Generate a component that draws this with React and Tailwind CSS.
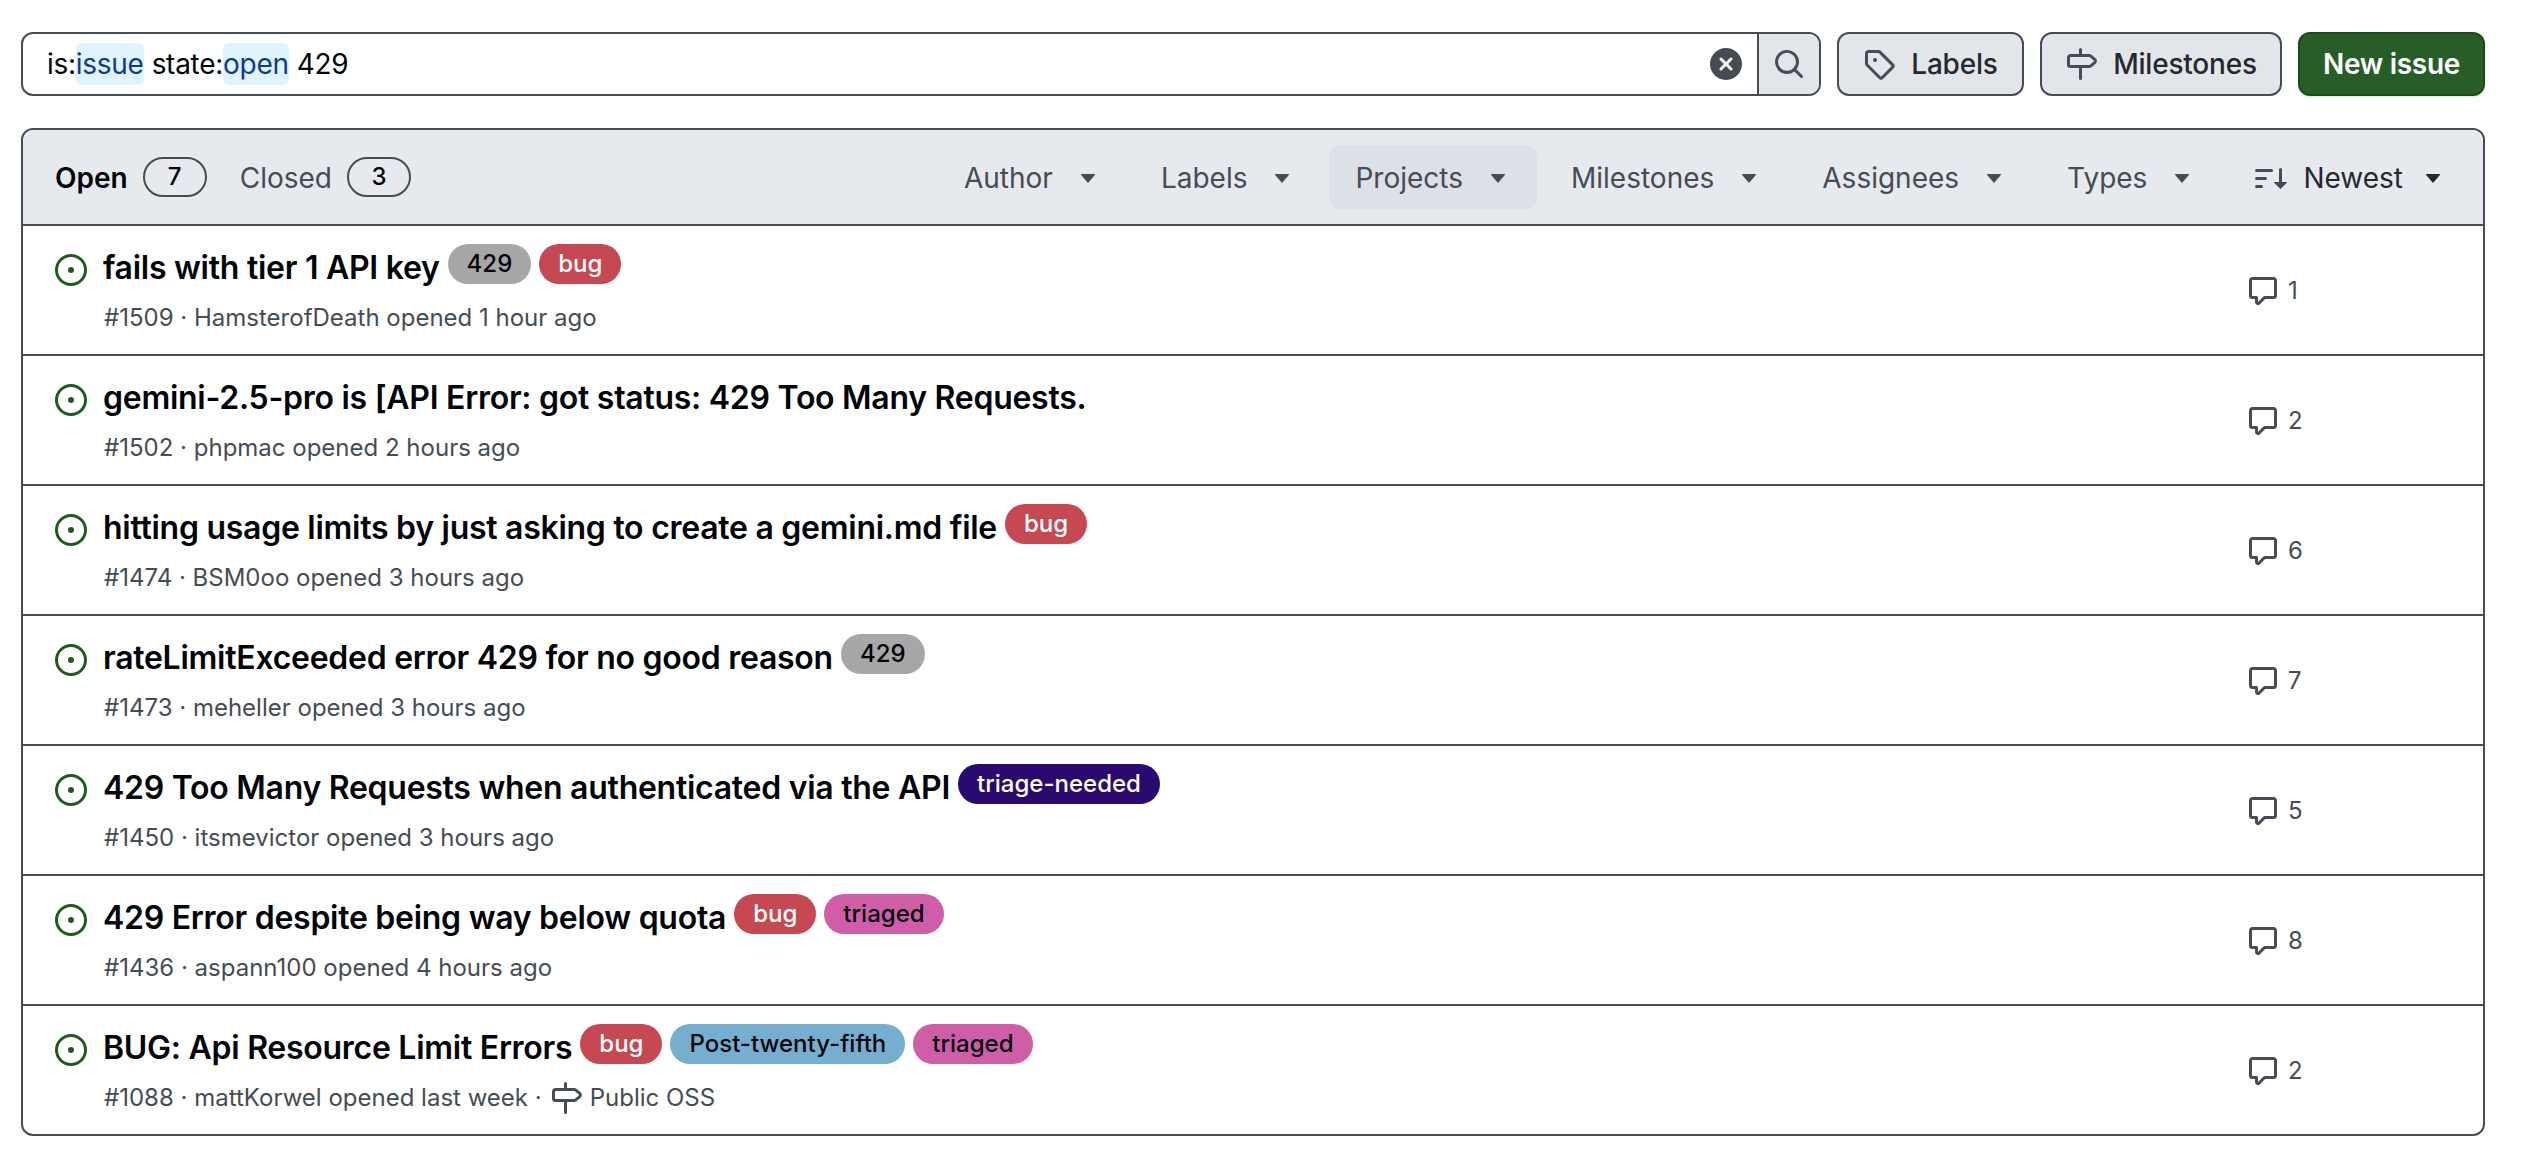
import React from "react";

const Icon = ({ d, size = 32, className = "" }) => (
  <svg viewBox="0 0 16 16" width={size} height={size} fill="currentColor" className={className}>
    <path d={d} />
  </svg>
);

const ICONS = {
  issue:
    "M8 9.5a1.5 1.5 0 1 0 0-3 1.5 1.5 0 0 0 0 3ZM8 0a8 8 0 1 1 0 16A8 8 0 0 1 8 0ZM1.5 8a6.5 6.5 0 1 0 13 0 6.5 6.5 0 0 0-13 0Z",
  tag: "M1 7.775V2.75C1 1.784 1.784 1 2.75 1h5.025c.464 0 .91.184 1.238.513l6.25 6.25a1.75 1.75 0 0 1 0 2.474l-5.026 5.026a1.75 1.75 0 0 1-2.474 0l-6.25-6.25A1.752 1.752 0 0 1 1 7.775Zm1.5 0c0 .066.026.13.073.177l6.25 6.25a.25.25 0 0 0 .354 0l5.025-5.025a.25.25 0 0 0 0-.354l-6.25-6.25a.25.25 0 0 0-.177-.073H2.75a.25.25 0 0 0-.25.25ZM6 5a1 1 0 1 1 0 2 1 1 0 0 1 0-2Z",
  milestone:
    "M7.75 0a.75.75 0 0 1 .75.75V3h3.634c.414 0 .814.147 1.13.414l2.07 1.75a1.75 1.75 0 0 1 0 2.672l-2.07 1.75a1.75 1.75 0 0 1-1.13.414H8.5v5.25a.75.75 0 0 1-1.5 0V10H2.75A1.75 1.75 0 0 1 1 8.25v-3.5C1 3.784 1.784 3 2.75 3H7V.75A.75.75 0 0 1 7.75 0Zm4.384 8.5a.25.25 0 0 0 .161-.059l2.07-1.75a.248.248 0 0 0 0-.382l-2.07-1.75a.25.25 0 0 0-.161-.059H2.75a.25.25 0 0 0-.25.25v3.5c0 .138.112.25.25.25h9.384Z",
  comment:
    "M1 2.75C1 1.784 1.784 1 2.75 1h10.5c.966 0 1.75.784 1.75 1.75v7.5A1.75 1.75 0 0 1 13.25 12H9.06l-2.573 2.573A1.458 1.458 0 0 1 4 13.543V12H2.75A1.75 1.75 0 0 1 1 10.25Zm1.75-.25a.25.25 0 0 0-.25.25v7.5c0 .138.112.25.25.25h2a.75.75 0 0 1 .75.75v2.19l2.72-2.72a.749.749 0 0 1 .53-.22h4.5a.25.25 0 0 0 .25-.25v-7.5a.25.25 0 0 0-.25-.25Z",
  search:
    "M10.68 11.74a6 6 0 0 1-7.922-8.982 6 6 0 0 1 8.982 7.922l3.04 3.04a.749.749 0 0 1-.326 1.275.749.749 0 0 1-.734-.215ZM11.5 7a4.499 4.499 0 1 0-8.997 0A4.499 4.499 0 0 0 11.5 7Z",
  clear:
    "M2.343 13.657A8 8 0 1 1 13.658 2.343 8 8 0 0 1 2.343 13.657ZM6.03 4.97a.751.751 0 0 0-1.042.018.751.751 0 0 0-.018 1.042L6.94 8 4.97 9.97a.749.749 0 0 0 .326 1.275.749.749 0 0 0 .734-.215L8 9.06l1.97 1.97a.749.749 0 0 0 1.275-.326.749.749 0 0 0-.215-.734L9.06 8l1.97-1.97a.749.749 0 0 0-.326-1.275.749.749 0 0 0-.734.215L8 6.94Z",
  sort: "M0 4.25a.75.75 0 0 1 .75-.75h7.5a.75.75 0 0 1 0 1.5H.75A.75.75 0 0 1 0 4.25Zm0 4a.75.75 0 0 1 .75-.75h4.5a.75.75 0 0 1 0 1.5H.75A.75.75 0 0 1 0 8.25Zm0 4a.75.75 0 0 1 .75-.75h2.5a.75.75 0 0 1 0 1.5H.75a.75.75 0 0 1-.75-.75ZM13.5 10h2.25a.25.25 0 0 1 .177.427l-3 3a.25.25 0 0 1-.354 0l-3-3A.25.25 0 0 1 9.75 10H12V3.75a.75.75 0 0 1 1.5 0V10Z",
};

const LABELS = {
  429: "bg-[#a7a7a7] text-[#010409]",
  bug: "bg-[#c64852] text-white",
  "triage-needed": "bg-[#2a0a6e] text-white",
  triaged: "bg-[#d05da8] text-[#010409]",
  "Post-twenty-fifth": "bg-[#76aecf] text-[#010409]",
};

const issues = [
  { title: "fails with tier 1 API key", labels: ["429", "bug"], meta: "#1509 · HamsterofDeath opened 1 hour ago", comments: 1 },
  { title: "gemini-2.5-pro is [API Error: got status: 429 Too Many Requests.", labels: [], meta: "#1502 · phpmac opened 2 hours ago", comments: 2 },
  { title: "hitting usage limits by just asking to create a gemini.md file", labels: ["bug"], meta: "#1474 · BSM0oo opened 3 hours ago", comments: 6 },
  { title: "rateLimitExceeded error 429 for no good reason", labels: ["429"], meta: "#1473 · meheller opened 3 hours ago", comments: 7 },
  { title: "429 Too Many Requests when authenticated via the API", labels: ["triage-needed"], meta: "#1450 · itsmevictor opened 3 hours ago", comments: 5 },
  { title: "429 Error despite being way below quota", labels: ["bug", "triaged"], meta: "#1436 · aspann100 opened 4 hours ago", comments: 8 },
  { title: "BUG: Api Resource Limit Errors", labels: ["bug", "Post-twenty-fifth", "triaged"], meta: "#1088 · mattKorwel opened last week ·", milestone: "Public OSS", comments: 2 },
];

const filters = ["Author", "Labels", "Projects", "Milestones", "Assignees", "Types"];

const Caret = ({ className = "ml-[28px]" }) => (
  <svg viewBox="0 0 14 9" width="14" height="9" fill="currentColor" className={`shrink-0 ${className}`}>
    <path d="M0.6 0h12.8a.6.6 0 0 1 .45 1L7.45 8.5a.6.6 0 0 1-.9 0L.15 1A.6.6 0 0 1 .6 0Z" />
  </svg>
);

const Counter = ({ children }) => (
  <span className="ml-[15px] flex h-[40px] w-[64px] items-center justify-center rounded-full border-2 border-[#454c54] text-[24px] font-medium text-[#010409]">
    {children}
  </span>
);

const FilterButton = ({ name }) => (
  <div
    className={`flex h-[64px] items-center rounded-[12px] pl-[26px] pr-[32px] pt-[2px] text-[28px] text-[#454c54] ${
      name === "Projects" ? "bg-[#dce0e7]" : ""
    }`}
  >
    {name}
    <Caret />
  </div>
);

const IssueRow = ({ issue }) => (
  <div className="flex h-[130px] items-start border-t-2 border-[#454c54]">
    <Icon d={ICONS.issue} className="ml-[32px] mt-[28px] shrink-0 text-[#1f5a1f]" />
    <div className="ml-[16px] flex-1 pt-[18px]">
      <div className="flex h-[40px] items-center">
        <span className="pt-[7px] text-[32px] font-semibold leading-[40px] tracking-[-0.27px] text-[#010409]">
          {issue.title}
        </span>
        {issue.labels.map((label) => (
          <span
            key={label}
            className={`ml-[8px] flex h-[40px] items-center rounded-full px-[19px] text-[24px] font-medium ${LABELS[label]}`}
          >
            {label}
          </span>
        ))}
      </div>
      <div className="mt-[16px] flex h-[36px] items-center pl-[1px] text-[24px] text-[#454c54]">
        {issue.meta}
        {issue.milestone && (
          <>
            <Icon d={ICONS.milestone} className="ml-[8px] mr-[8px]" />
            {issue.milestone}
          </>
        )}
      </div>
    </div>
    <div className="flex w-[236px] shrink-0 items-center gap-[9px] self-center pt-[2px] text-[24px] text-[#454c54]">
      <Icon d={ICONS.comment} />
      {issue.comments}
    </div>
  </div>
);

export default function App() {
  return (
    <div className="min-h-[1174px] bg-white pl-[21px] pt-[32px] text-[#010409] [font-family:Inter,'Noto_Sans',sans-serif]">
      <div className="w-[2464px]">
        <div className="flex h-[64px] gap-[16px]">
          <div className="flex flex-1 overflow-hidden rounded-[12px] border-2 border-[#454c54]">
            <div className="flex flex-1 items-center pl-[24px] pr-[15px] text-[28px] tracking-[-0.28px]">
              <span>is:</span>
              <span className="rounded-[6px] bg-[#e1f4fd] text-[#0f3a8f]">issue</span>
              <span className="ml-[8px]">state:</span>
              <span className="rounded-[6px] bg-[#e1f4fd] text-[#0f3a8f]">open</span>
              <span className="ml-[8px]">429</span>
              <Icon d={ICONS.clear} className="ml-auto text-[#454c54]" />
            </div>
            <div className="flex w-[62px] items-center justify-center border-l-2 border-[#454c54] bg-[#e2e6eb] text-[#454c54]">
              <Icon d={ICONS.search} />
            </div>
          </div>
          <div className="flex w-[187px] items-center justify-center gap-[16px] rounded-[12px] border-2 border-[#454c54] bg-[#e2e6eb] text-[28px] font-medium tracking-[-0.2px] text-[#25292e]">
            <Icon d={ICONS.tag} className="text-[#454c54]" />
            Labels
          </div>
          <div className="flex w-[242px] items-center justify-center gap-[16px] rounded-[12px] border-2 border-[#454c54] bg-[#e2e6eb] text-[28px] font-medium tracking-[-0.2px] text-[#25292e]">
            <Icon d={ICONS.milestone} className="text-[#454c54]" />
            Milestones
          </div>
          <div className="flex w-[187px] items-center justify-center rounded-[12px] border-2 border-[#1c4a1c] bg-[#275d27] text-[28px] font-semibold tracking-[-0.3px] text-white shadow-sm">
            New issue
          </div>
        </div>

        <div className="mt-[32px] overflow-hidden rounded-[12px] border-2 border-[#454c54]">
          <div className="flex h-[94px] items-center bg-[#e6eaef] pr-[8px]">
            <div className="ml-[32px] flex items-center text-[28px] font-semibold">
              <span className="pt-[2px]">Open</span>
              <Counter>7</Counter>
            </div>
            <div className="ml-[33px] flex items-center text-[28px] text-[#454c54]">
              <span className="pt-[2px]">Closed</span>
              <Counter>3</Counter>
            </div>
            <div className="ml-auto flex items-center gap-[8px]">
              {filters.map((name) => (
                <FilterButton key={name} name={name} />
              ))}
              <div className="flex h-[64px] items-center pl-[26px] pr-[35px] pt-[2px] text-[28px] text-[#25292e]">
                <Icon d={ICONS.sort} className="mr-[16px] text-[#454c54]" />
                Newest
                <Caret className="ml-[23px]" />
              </div>
            </div>
          </div>
          {issues.map((issue) => (
            <IssueRow key={issue.meta} issue={issue} />
          ))}
        </div>
      </div>
    </div>
  );
}
